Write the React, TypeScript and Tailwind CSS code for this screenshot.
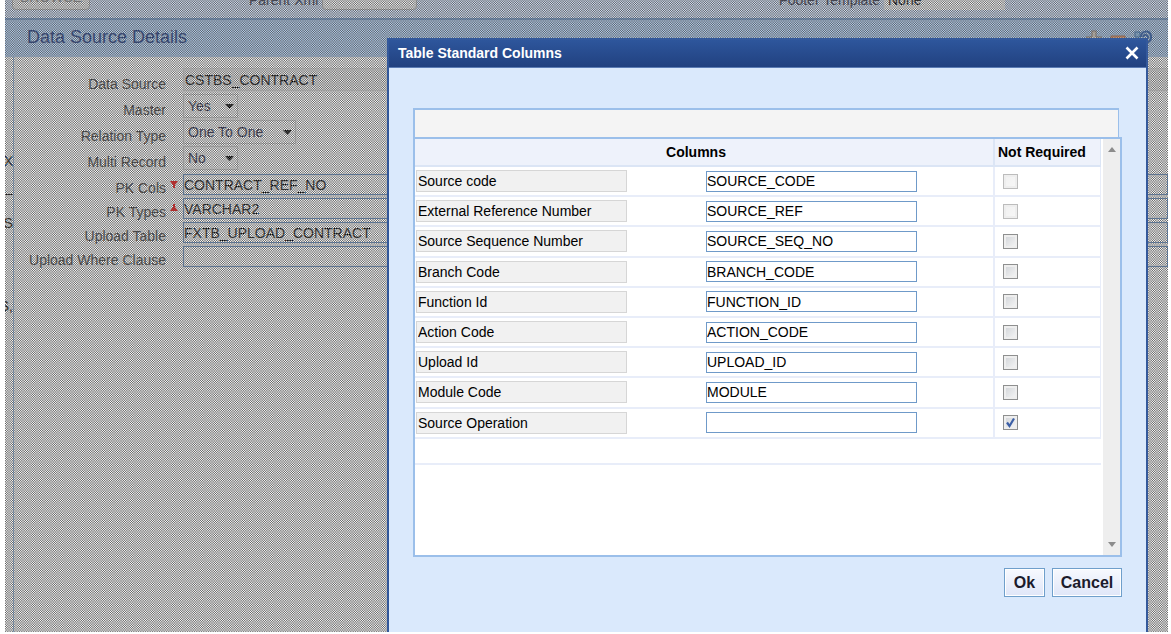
import { useState } from 'react'
import type { ReactNode } from 'react'

interface StandardColumn {
  label: string
  column: string
  locked?: boolean
  notRequired?: boolean
}

const STANDARD_COLUMNS: StandardColumn[] = [
  { label: 'Source code', column: 'SOURCE_CODE', locked: true },
  { label: 'External Reference Number', column: 'SOURCE_REF', locked: true },
  { label: 'Source Sequence Number', column: 'SOURCE_SEQ_NO' },
  { label: 'Branch Code', column: 'BRANCH_CODE' },
  { label: 'Function Id', column: 'FUNCTION_ID' },
  { label: 'Action Code', column: 'ACTION_CODE' },
  { label: 'Upload Id', column: 'UPLOAD_ID' },
  { label: 'Module Code', column: 'MODULE' },
  { label: 'Source Operation', column: '', notRequired: true },
]

const TILE = 7
const DITHER = Array.from({ length: TILE * TILE }, (_, i) => {
  const x = i % TILE
  const y = Math.floor(i / TILE)
  const wave = (n: number) => Math.cos((Math.PI * n * 8) / TILE)
  return { x, y, alpha: 0.5 + 0.5 * wave(x) * wave(y - 3) }
})

// Dotted screen that dims the page behind the dialog
function DimScreen() {
  return (
    <svg className="absolute inset-0 h-full w-full" aria-hidden="true" shapeRendering="crispEdges">
      <defs>
        <pattern id="dither" width={TILE} height={TILE} patternUnits="userSpaceOnUse">
          {DITHER.map((d) => (
            <rect key={`${d.x}-${d.y}`} x={d.x} y={d.y} width="1" height="1" fill="#606060" fillOpacity={d.alpha} />
          ))}
        </pattern>
      </defs>
      <rect width="100%" height="100%" fill="url(#dither)" />
    </svg>
  )
}

function FormRow({
  id,
  label,
  marker,
  tall,
  children,
}: {
  id: string
  label: string
  marker?: 'down' | 'up'
  tall?: boolean
  children: ReactNode
}) {
  return (
    <div className={tall ? 'flex h-[26px] items-start' : 'flex h-6 items-start'}>
      <label htmlFor={id} className="w-[152px] shrink-0 pt-2 text-right text-sm leading-4 text-[#333]">
        {label}
      </label>
      <span className="flex w-[17px] shrink-0 justify-center pt-2 pr-px">
        {marker && (
          <svg width="8" height="8" viewBox="0 0 8 8" fill="#ff0000" className={marker === 'up' ? 'rotate-180' : ''}>
            <path d="M0 1h8L5 5v3H3V5z" />
          </svg>
        )}
      </span>
      {children}
    </div>
  )
}

function FormSelect({ id, options, className }: { id: string; options: string[]; className: string }) {
  return (
    <span className="relative flex">
      <select
        id={id}
        className={`h-6 appearance-none border border-[#d0d0d0] bg-white pl-1 text-sm leading-4 text-[#1c1c40] ${className}`}
      >
        {options.map((o) => (
          <option key={o}>{o}</option>
        ))}
      </select>
      <svg className="pointer-events-none absolute top-[9px] right-1" width="9" height="6" viewBox="0 0 9 6">
        <path d="M0 1h9L4.500 6z" fill="#000" />
      </svg>
    </span>
  )
}

function DataSourceForm() {
  const input = 'mt-[2px] h-[21px] min-w-0 flex-1 border border-[#5f8cc4] bg-white text-sm leading-4 text-black'
  return (
    <form className="flex-1 border-l border-[#8fb3dc] pt-[11px]">
      <FormRow id="data-source" label="Data Source" tall>
        <input
          id="data-source"
          readOnly
          defaultValue="CSTBS_CONTRACT"
          className="h-[23px] min-w-0 flex-1 border border-[#e0e0e0] bg-[#f0f0f0] pl-px text-sm leading-4 text-black"
        />
      </FormRow>
      <FormRow id="master" label="Master" tall>
        <FormSelect id="master" options={['Yes', 'No']} className="w-[55px]" />
      </FormRow>
      <FormRow id="relation-type" label="Relation Type" tall>
        <FormSelect id="relation-type" options={['One To One', 'One To Many']} className="w-[113px]" />
      </FormRow>
      <FormRow id="multi-record" label="Multi Record" tall>
        <FormSelect id="multi-record" options={['No', 'Yes']} className="w-[55px]" />
      </FormRow>
      <FormRow id="pk-cols" label="PK Cols" marker="down">
        <input id="pk-cols" defaultValue="CONTRACT_REF_NO" className={input} />
      </FormRow>
      <FormRow id="pk-types" label="PK Types" marker="up">
        <input id="pk-types" defaultValue="VARCHAR2" className={input} />
      </FormRow>
      <FormRow id="upload-table" label="Upload Table">
        <input id="upload-table" defaultValue="FXTB_UPLOAD_CONTRACT" className={input} />
      </FormRow>
      <FormRow id="where-clause" label="Upload Where Clause">
        <input id="where-clause" className={input} />
      </FormRow>
    </form>
  )
}

function Page() {
  return (
    <main className="flex flex-1 flex-col overflow-hidden bg-white">
      {/* Toolbar */}
      <div className="flex h-[18px] items-end overflow-hidden bg-[#d2e2fb] pb-2 pl-[7px] text-sm leading-5">
        <button className="h-6 w-[78px] shrink-0 rounded-sm border border-[#b8b8b8] bg-[#f4f4f4] pb-2 text-[#8a8a8a]">
          BROWSE
        </button>
        <label htmlFor="parent-xml" className="ml-[159px] shrink-0 text-[#2a2a40]">
          Parent Xml
        </label>
        <input id="parent-xml" className="ml-1 h-6 w-[95px] shrink-0 rounded-sm border border-[#b8b8b8] bg-[#fafafa]" />
        <div className="ml-auto flex shrink-0 items-end pr-[163px]">
          <label htmlFor="footer-template" className="text-[#2a2a40]">
            Footer Template
          </label>
          <select id="footer-template" className="ml-1 h-5 w-[121px] appearance-none bg-[#fafafa] pl-1 text-black">
            <option>None</option>
          </select>
        </div>
      </div>

      {/* Section header */}
      <header className="flex h-[39px] items-center justify-between border-t-2 border-[#6f98cc] bg-[#b0d0f6] pr-4 pl-[22px]">
        <h1 className="pb-1 text-lg leading-6 text-[#0f2f7c]">Data Source Details</h1>
        <div className="flex items-center gap-2">
          <button aria-label="Add">
            <svg width="16" height="18" viewBox="0 0 16 18">
              <path d="M6 1h4v6h6v4h-6v6H6v-6H0V7h6z" fill="#e6ddd2" stroke="#8a7668" />
            </svg>
          </button>
          <button aria-label="Remove">
            <svg width="16" height="18" viewBox="0 0 16 18">
              <path d="M1 6h14v4H1z" fill="#f0a070" stroke="#b8683c" />
            </svg>
          </button>
          <button aria-label="Single record view">
            <svg width="18" height="18" viewBox="0 0 18 18" fill="none">
              <path d="M1 2h5v5H1zM1 11h8v6H1z" fill="#8fc3f5" stroke="#2d6cb4" />
              <path d="M7 7c0-7 9-7 10-1s-5 8-8 6M9 7c1-3 5-3 5 1" stroke="#1f58b5" strokeWidth="2" />
            </svg>
          </button>
        </div>
      </header>

      <div className="flex flex-1">
        {/* Visible edge of the tree panel */}
        <div className="w-2 overflow-hidden pt-24 text-sm leading-4 text-black">
          <div className="flex flex-col items-end">
            <span>X</span>
            <span className="mt-[10px]">L_</span>
            <span className="mt-5">S</span>
            <span className="mt-[67px]">S,</span>
          </div>
        </div>
        <DataSourceForm />
      </div>
    </main>
  )
}

function ColumnsTable() {
  const [checked, setChecked] = useState(STANDARD_COLUMNS.map((c) => !!c.notRequired))

  const toggle = (index: number) => setChecked(checked.map((c, i) => (i === index ? !c : c)))

  return (
    <div className="flex h-[420px] border-2 border-[#9bbfea] bg-white">
      <div className="min-w-0 flex-1">
        <table className="h-[326px] w-full table-fixed border-separate border-spacing-0 text-sm leading-4 text-black">
          <colgroup>
            <col className="w-[291px]" />
            <col />
            <col className="w-[106px]" />
          </colgroup>
          <thead>
            <tr className="h-7 bg-[#eef2fb]">
              <th colSpan={2} className="border-r-2 border-b-2 border-[#dbe5f5] pr-4 text-center font-bold">
                Columns
              </th>
              <th className="border-r border-b-2 border-[#dbe5f5] pl-[3px] text-left font-bold">Not Required</th>
            </tr>
          </thead>
          <tbody>
            {STANDARD_COLUMNS.map((row, i) => (
              <tr key={row.label} className="h-[30px]">
                <td className="border-b-2 border-[#e8edf9] pl-px">
                  <input
                    readOnly
                    aria-label={`Label ${i + 1}`}
                    value={row.label}
                    className="block h-[22px] w-[211px] border border-[#d6d6d6] bg-[#f1f1f1] pl-px"
                  />
                </td>
                <td className="border-r-2 border-b-2 border-[#e8edf9]">
                  <input
                    aria-label={row.label}
                    defaultValue={row.column}
                    className="block h-[21px] w-[211px] border border-[#6f9ac9] bg-white"
                  />
                </td>
                <td className="border-r border-b-2 border-[#e8edf9] pl-2">
                  <span className="relative block size-[15px]">
                    <input
                      type="checkbox"
                      aria-label={`${row.label} not required`}
                      checked={checked[i]}
                      disabled={row.locked}
                      onChange={() => toggle(i)}
                      className="block size-[15px] appearance-none border border-[#8e8f8f] bg-linear-to-br from-[#cfd2d6] to-[#f8f8f8] shadow-[inset_0_0_0_2px_#eeeeee] disabled:border-[#bcbcbc] disabled:from-[#f0f0f0]"
                    />
                    {checked[i] && (
                      <svg className="pointer-events-none absolute inset-0" width="15" height="15" viewBox="0 0 15 15">
                        <path d="M4 7.500L6.500 11 11 3.500" fill="none" stroke="#3c5fa6" strokeWidth="2.200" />
                      </svg>
                    )}
                  </span>
                </td>
              </tr>
            ))}
            <tr className="h-[26px]">
              <td colSpan={3} className="border-b-2 border-[#e8edf9]" />
            </tr>
          </tbody>
        </table>
      </div>
      {/* Scrollbar */}
      <div className="ml-[2px] flex w-[17px] flex-col items-center justify-between bg-[#eeeeee] py-2">
        <svg width="8" height="5" viewBox="0 0 8 5">
          <path d="M4 0l4 5H0z" fill="#8c8c8c" />
        </svg>
        <svg width="8" height="5" viewBox="0 0 8 5">
          <path d="M0 0h8L4 5z" fill="#8c8c8c" />
        </svg>
      </div>
    </div>
  )
}

function StandardColumnsDialog() {
  const button =
    'h-[29px] border border-[#6f9fcb] bg-linear-to-b from-[#f7f9fe] to-[#dfe6f8] text-base leading-5 font-bold text-[#1b1b2b] shadow-[inset_0_0_0_1px_#ffffff]'
  return (
    <section
      role="dialog"
      aria-labelledby="dialog-title"
      className="absolute top-[38px] right-5 bottom-0 left-[382px] flex flex-col border-x-2 border-[#34599b] bg-[#dae9fc]"
    >
      <div className="flex h-[30px] shrink-0 items-center justify-between border-t-2 border-b border-t-[#34599b] border-b-[#5b7cb5] bg-linear-to-b from-[#2e569c] to-[#214180] pr-[7px] pb-px pl-[9px]">
        <h2 id="dialog-title" className="text-sm leading-4 font-bold text-white">
          Table Standard Columns
        </h2>
        <button aria-label="Close">
          <svg width="14" height="14" viewBox="0 0 14 14" stroke="#fff" strokeWidth="2.600">
            <path d="M1.500 1.500l11 11M12.500 1.500l-11 11" />
          </svg>
        </button>
      </div>
      <div className="flex flex-1 flex-col pt-10 pr-6 pl-6">
        <div className="mr-[3px] h-[29px] border-2 border-r border-b-0 border-[#9bbfea] bg-[#f4f4f4]" />
        <ColumnsTable />
        <div className="mt-[11px] flex justify-end gap-[7px]">
          <button className={`${button} w-[41px]`}>Ok</button>
          <button className={`${button} w-[70px]`}>Cancel</button>
        </div>
      </div>
    </section>
  )
}

export default function App() {
  return (
    <div className="flex min-h-screen bg-white pr-[3px] pb-[2px] pl-[5px] font-['Liberation_Sans',Arial,sans-serif]">
      <div className="relative flex min-w-0 flex-1">
        <Page />
        <DimScreen />
        <StandardColumnsDialog />
      </div>
    </div>
  )
}
